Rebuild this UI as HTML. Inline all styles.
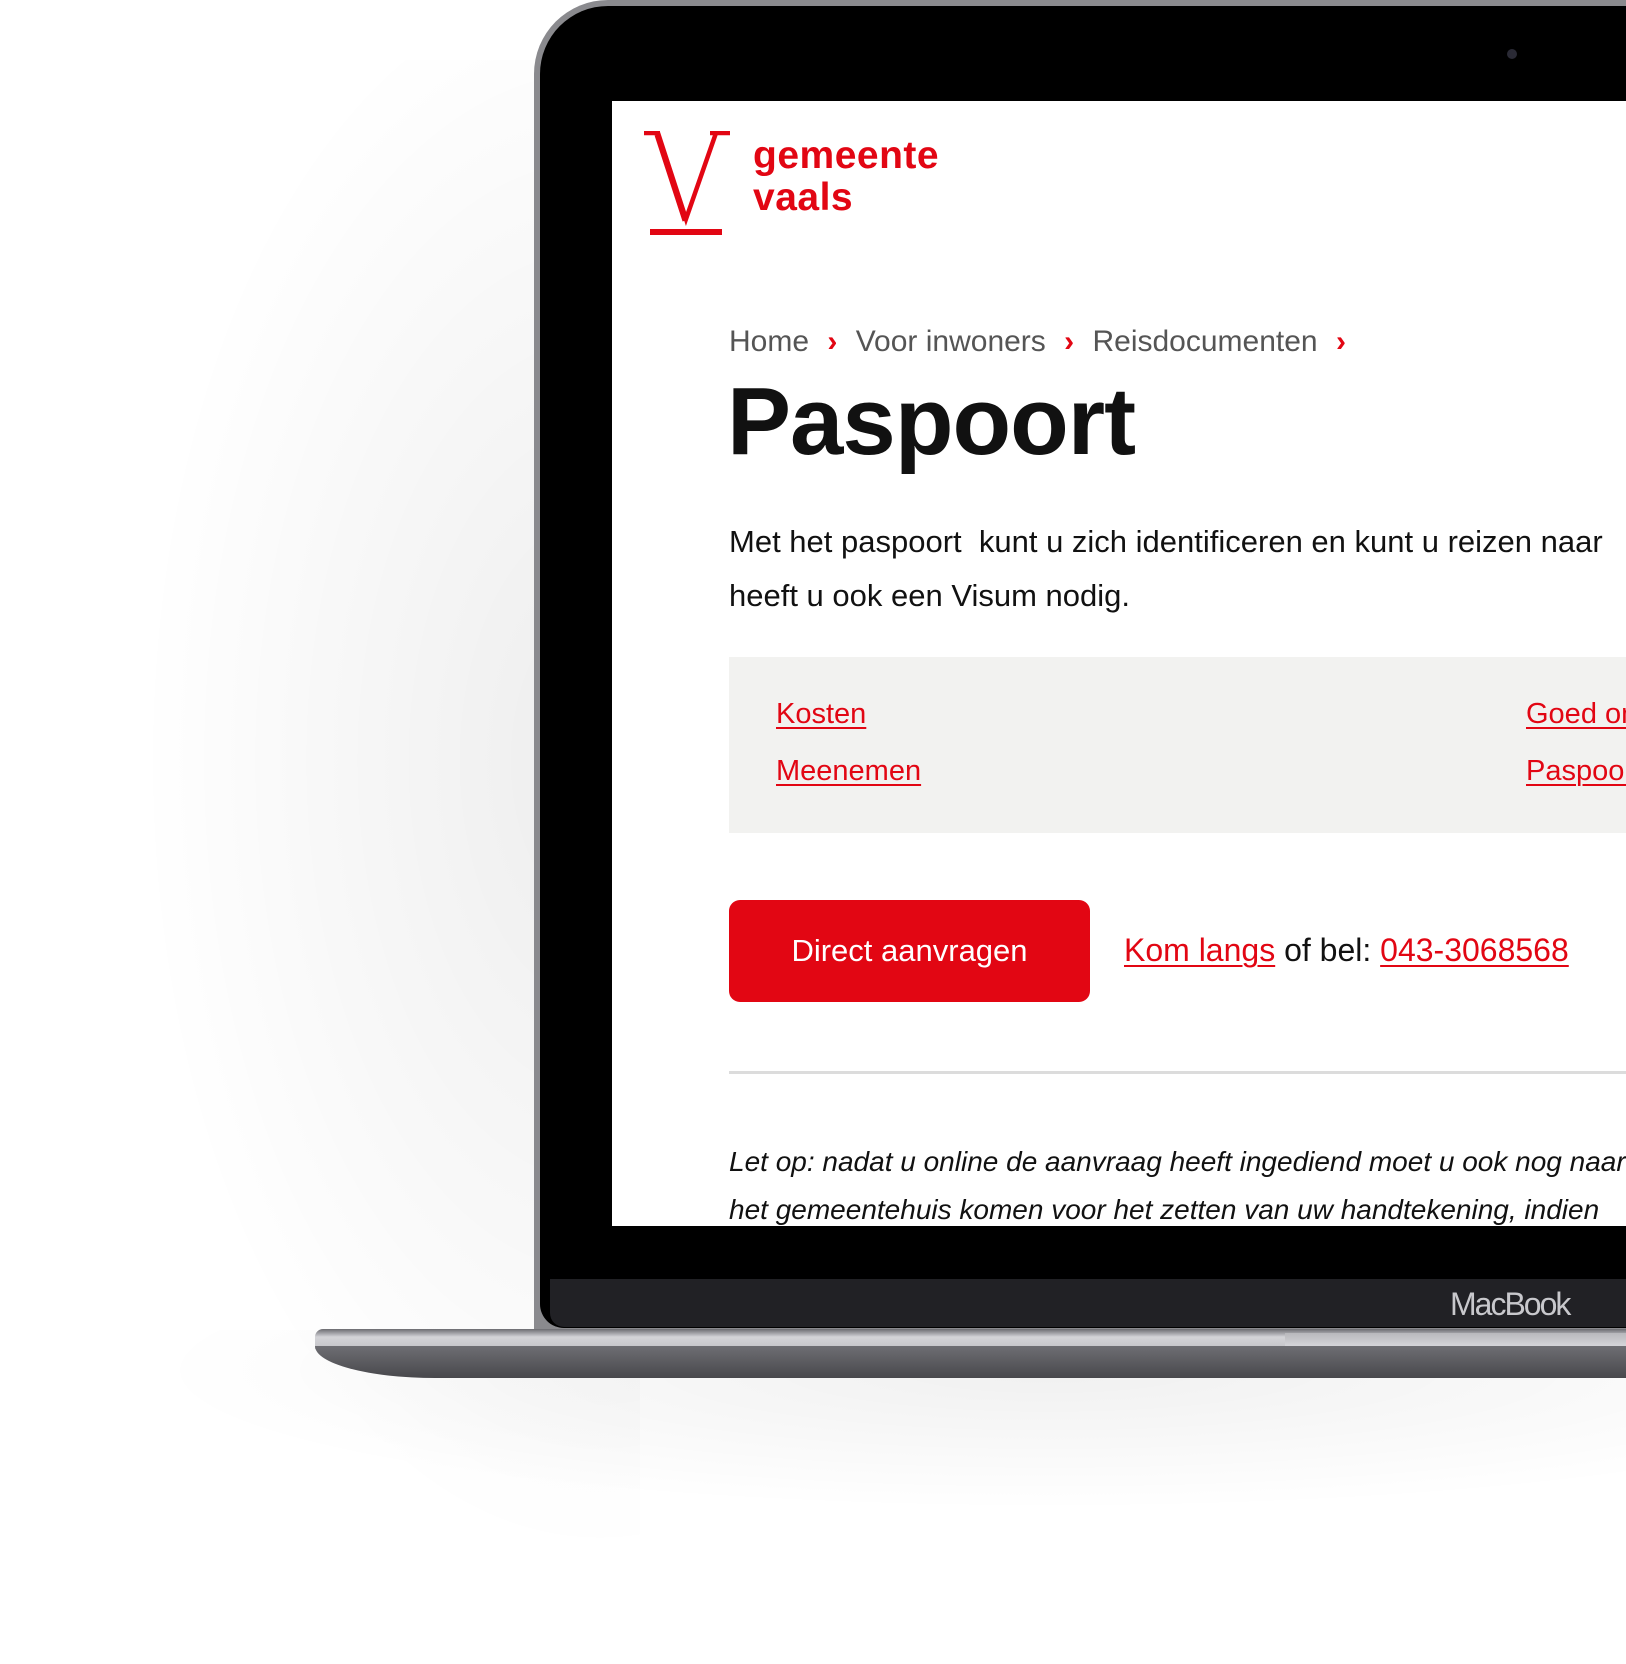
<!DOCTYPE html>
<html><head><meta charset="utf-8"><style>
html,body{margin:0;padding:0}
body{width:1626px;height:1664px;position:relative;overflow:hidden;background:#fff;font-family:"Liberation Sans",sans-serif}
.abs{position:absolute}
.red{color:#e20613}
a{color:#e20613;text-decoration:underline;text-decoration-thickness:2px;text-underline-offset:4px}
</style></head><body>
<!-- shadow -->
<div class="abs" style="left:0;top:60px;width:640px;height:1500px;background:radial-gradient(ellipse 460px 800px at 600px 700px,rgba(0,0,0,0.07),rgba(0,0,0,0) 100%)"></div>
<div class="abs" style="left:150px;top:1330px;width:1476px;height:250px;background:radial-gradient(ellipse 900px 140px at 900px 40px,rgba(0,0,0,0.06),rgba(0,0,0,0) 100%)"></div>
<!-- lid -->
<div class="abs" style="left:534px;top:0;width:1092px;height:1330px;background:#8a8a8e;border-radius:74px 0 0 0"></div>
<div class="abs" style="left:540px;top:6px;width:1086px;height:1322px;background:#000;border-radius:68px 0 0 24px"></div>
<div class="abs" style="left:550px;top:1279px;width:1076px;height:48px;background:#212125;border-radius:0 0 0 14px"></div>
<div class="abs" style="left:1450px;top:1286px;color:#c8c8cc;font-size:32px;letter-spacing:-2px">MacBook</div>
<div class="abs" style="left:1507px;top:49px;width:10px;height:10px;border-radius:50%;background:#2a2a35"></div>
<!-- base -->
<div class="abs" style="left:315px;top:1329px;width:1311px;height:20px;background:linear-gradient(#6b6b70,#d4d4d8 40%,#c4c4c8);border-radius:8px 0 0 0"></div>
<div class="abs" style="left:1285px;top:1333px;width:341px;height:16px;background:linear-gradient(#b8b8bc,#dcdce0)"></div>
<div class="abs" style="left:315px;top:1346px;width:1311px;height:32px;background:linear-gradient(#6e6e73,#48484c);border-radius:0 0 0 120px/0 0 0 32px"></div>
<!-- screen -->
<div class="abs" style="left:612px;top:101px;width:1014px;height:1125px;background:#fff;overflow:hidden">
 <svg class="abs" style="left:30px;top:30px" width="90" height="108" viewBox="0 0 90 108">
  <g fill="none" stroke="#e20613" stroke-width="4.5">
   <path d="M2 2 H18 M16 2 L44 88 L74 2 M68 2 H88"/>
   <path d="M14 4 L42 90" stroke-width="3"/>
  </g>
  <rect x="8" y="98" width="72" height="6" fill="#e20613"/>
 </svg>
 <div class="abs red" style="left:141px;top:34px;font-size:39px;font-weight:bold;line-height:42px;letter-spacing:0.5px">gemeente<br>vaals</div>
 <div class="abs" style="left:117px;top:224px;font-size:30px;color:#555;white-space:nowrap">Home <span class="red" style="font-weight:bold;margin:0 10px">›</span> Voor inwoners <span class="red" style="font-weight:bold;margin:0 10px">›</span> Reisdocumenten <span class="red" style="font-weight:bold;margin:0 10px">›</span></div>
 <div class="abs" style="left:115px;top:266px;font-size:96px;font-weight:bold;color:#111;letter-spacing:-1px">Paspoort</div>
 <div class="abs" style="left:117px;top:414px;font-size:31px;line-height:54px;color:#111;white-space:nowrap">Met het paspoort&nbsp; kunt u zich identificeren en kunt u reizen naar<br>heeft u ook een Visum nodig.</div>
 <div class="abs" style="left:117px;top:556px;width:1000px;height:176px;background:#f2f2f0"></div>
 <div class="abs" style="left:164px;top:585px;font-size:29px;line-height:57px"><a>Kosten</a><br><a>Meenemen</a></div>
 <div class="abs" style="left:914px;top:585px;font-size:29px;line-height:57px;white-space:nowrap"><a>Goed om te weten</a><br><a>Paspoort</a></div>
 <div class="abs" style="left:117px;top:799px;width:361px;height:102px;background:#e20613;border-radius:11px;color:#fff;font-size:31px;line-height:102px;text-align:center">Direct aanvragen</div>
 <div class="abs" style="left:512px;top:831px;font-size:32px;color:#111;white-space:nowrap"><a>Kom langs</a> of bel: <a>043-3068568</a></div>
 <div class="abs" style="left:117px;top:970px;width:1000px;height:3px;background:#dcdcdc"></div>
 <div class="abs" style="left:117px;top:1037px;font-size:28px;line-height:48px;font-style:italic;color:#111;white-space:nowrap">Let op: nadat u online de aanvraag heeft ingediend moet u ook nog naar<br>het gemeentehuis komen voor het zetten van uw handtekening, indien</div>
</div>
</body></html>
